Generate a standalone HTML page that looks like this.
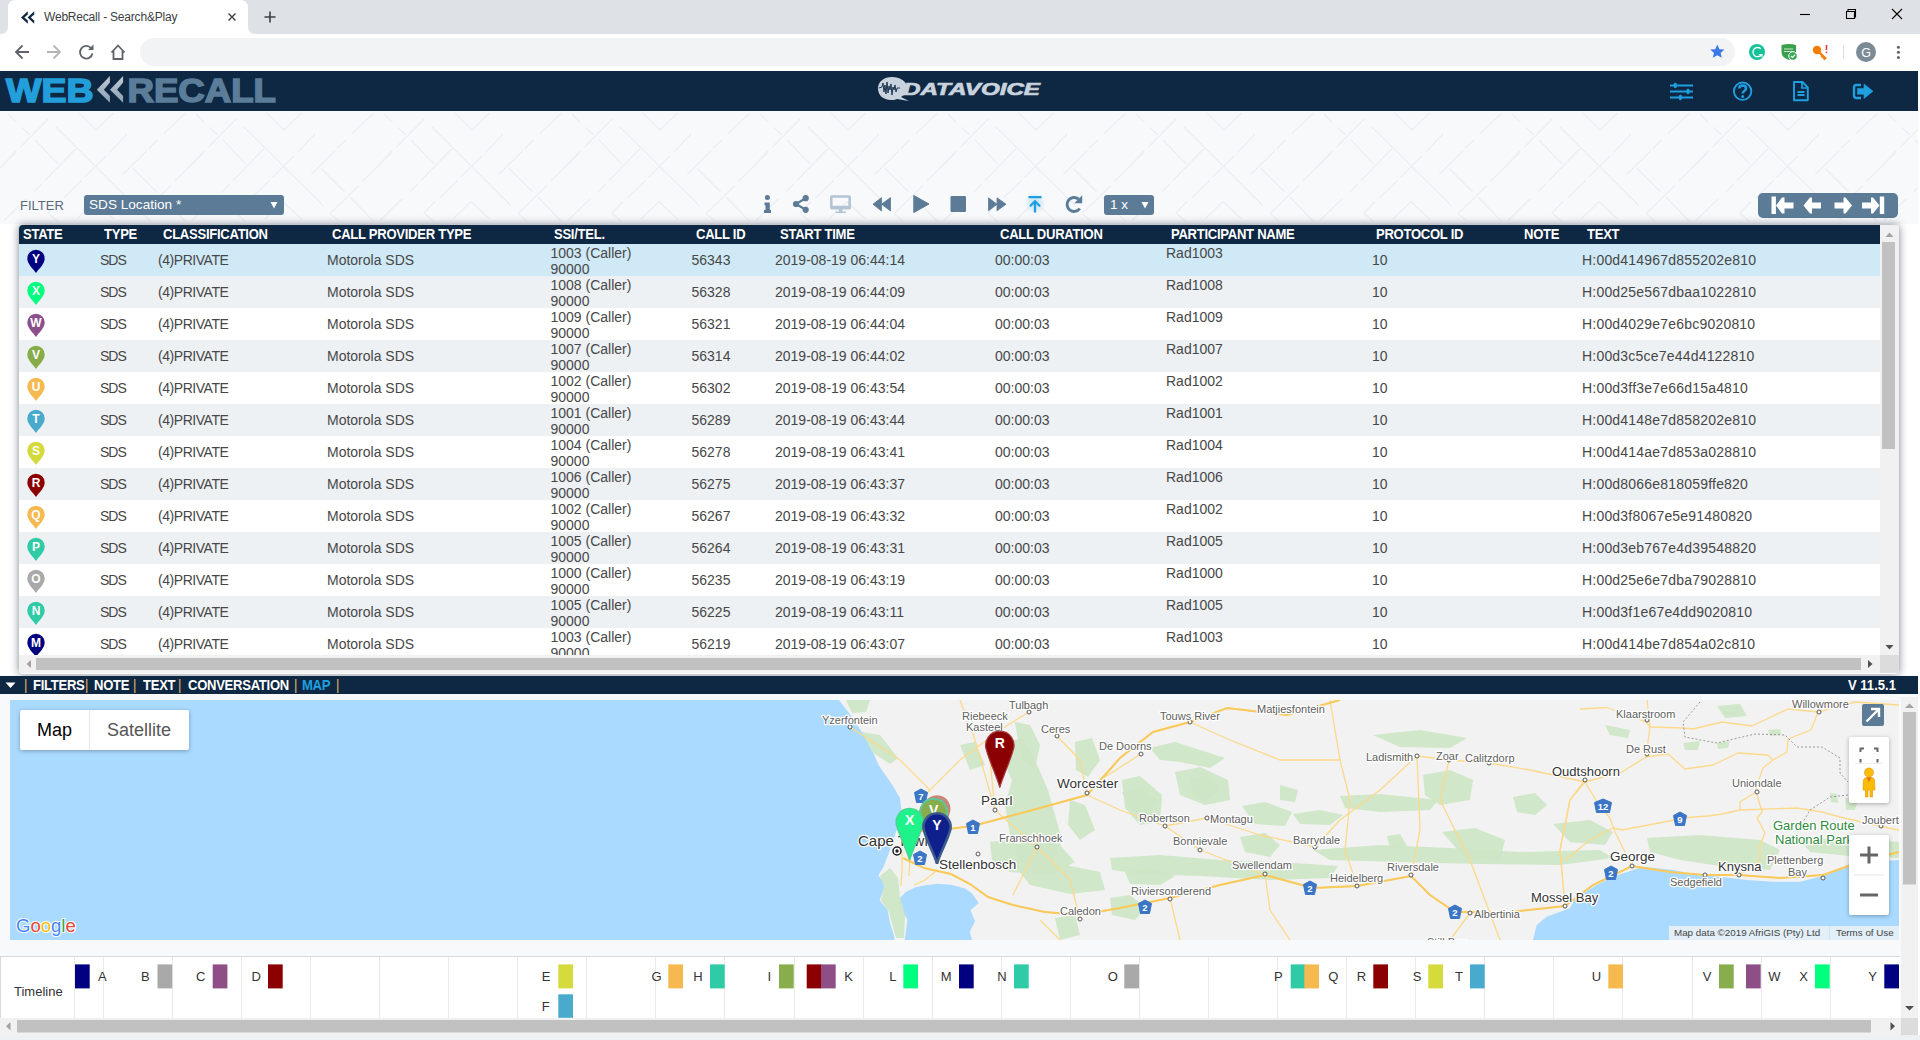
<!DOCTYPE html>
<html><head><meta charset="utf-8">
<style>
*{box-sizing:border-box;margin:0;padding:0}
html,body{width:1920px;height:1040px;overflow:hidden;font-family:"Liberation Sans",sans-serif;background:#f8f9fb;position:relative}
.abs{position:absolute}
#tabbar{left:0;top:0;width:1920px;height:34px;background:#dee1e6}
#tab{left:8px;top:1px;width:240px;height:33px;background:#fff;border-radius:8px 8px 0 0}
#tabtitle{left:44px;top:10px;font-size:12px;letter-spacing:-0.2px;color:#3c4043;white-space:nowrap}
#toolbar{left:0;top:34px;width:1920px;height:37px;background:#fff}
#omni{left:140px;top:38px;width:1595px;height:28px;background:#f1f3f4;border-radius:14px}
#hdr{left:0;top:71px;width:1918px;height:40px;background:#0e2742}
#pscroll{left:1918px;top:71px;width:2px;height:969px;background:#fff}
.lbl{font-size:13px;color:#5b6b7b}
#filterlbl{left:20px;top:198px}
#filtersel{left:84px;top:195px;width:200px;height:20px;background:#5b7b96;border-radius:3px;color:#fff;font-size:13.6px;padding:2px 0 0 5px}
#tbl{left:19px;top:225px;width:1880px;height:449px;background:#fff;box-shadow:0 0 9px rgba(15,30,50,.55);border-radius:4px;overflow:hidden}
#thead{left:0;top:0;width:1861px;height:19px;background:#0e2742;color:#fff;font-weight:bold;font-size:13px}
#thead span{position:absolute;top:1px;white-space:nowrap;letter-spacing:-0.3px;font-size:14.5px;transform:scaleX(.9);transform-origin:0 0}
.row{position:absolute;left:0;width:1861px;height:32px;font-size:14px;color:#474747}
.row span{position:absolute;white-space:nowrap}
.row .c{top:8px}
.row .t2{top:2px;line-height:15.5px}
.row .pn{top:1px}
#vscroll{left:1861px;top:0;width:19px;height:431px;background:#f1f1f1}
#hscroll{left:0;top:430px;width:1861px;height:18px;background:#f1f1f1}
#bar{left:0;top:676px;width:1918px;height:18px;background:#0e2742;color:#fff;font-weight:bold;font-size:13px}
.bt{position:absolute;top:1px;white-space:nowrap;letter-spacing:-0.3px;font-size:14.5px;transform:scaleX(.9);transform-origin:0 0}
.sep{color:#e3b867;font-weight:normal}
#map{left:10px;top:700px;width:1889px;height:240px;background:#aad3fb;overflow:hidden}
#mscroll{left:1901px;top:697px;width:17px;height:321px;background:#f1f1f1}
#tl{left:0;top:956px;width:1900px;height:62px;background:#fff;border-top:1px solid #d6d6d6}
#tlscroll{left:0;top:1018px;width:1900px;height:15px;background:#f1f1f1}
</style></head><body>
<div id="tabbar" class="abs"></div>
<svg class="abs" style="left:0;top:0" width="300" height="34" viewBox="0 0 300 34">
<path d="M0 34 Q8 34 8 26 L8 8 Q8 0 16 0 L240 0 Q248 0 248 8 L248 26 Q248 34 256 34 Z" fill="#fff"/>
<path d="M21 17.5 L27.8 11.2 V14.6 L24.3 17.5 L27.8 20.6 V23.8 Z M27.6 17.5 L34.2 11.2 V14.6 L30.8 17.5 L34.2 20.6 V23.8 Z" fill="#0e2742"/>
<path d="M228.5 13.5 L235.5 20.5 M235.5 13.5 L228.5 20.5" stroke="#3c4043" stroke-width="1.4"/>
<path d="M270 11.5 V22.5 M264.5 17 H275.5" stroke="#3c4043" stroke-width="1.6"/>
</svg>
<div id="tabtitle" class="abs">WebRecall - Search&amp;Play</div>
<svg class="abs" style="left:1780px;top:0" width="140" height="34" viewBox="0 0 140 34">
<path d="M20 14.5 H30" stroke="#000" stroke-width="1.1"/>
<path d="M66.5 11.5 H74.5 V18.5 H66.5 Z M68 11.5 V9.5 H75.5 V17 H74.5" fill="none" stroke="#000" stroke-width="1.1"/>
<path d="M112 9 L122 19 M122 9 L112 19" stroke="#000" stroke-width="1.1"/>
</svg>
<div id="toolbar" class="abs"></div>
<svg class="abs" style="left:0;top:34px" width="140" height="37" viewBox="0 0 140 37">
<path d="M29 18 H16.5 M22.5 11.5 L16 18 L22.5 24.5" fill="none" stroke="#5f6368" stroke-width="1.8"/>
<path d="M47 18 H59.5 M53.5 11.5 L60 18 L53.5 24.5" fill="none" stroke="#b4b6b8" stroke-width="1.8"/>
<path d="M91.2 14.2 A6.3 6.3 0 1 0 92.5 19.5" fill="none" stroke="#5f6368" stroke-width="1.8"/>
<path d="M93.5 10.5 V16 H88 Z" fill="#5f6368"/>
<path d="M111.5 18.5 L118 11.5 L124.5 18.5 M113.5 17 V25 H122.5 V17" fill="none" stroke="#5f6368" stroke-width="1.8" stroke-linejoin="miter"/>
</svg>
<div id="omni" class="abs"></div>
<svg class="abs" style="left:1700px;top:34px" width="220" height="37" viewBox="0 0 220 37">
<path d="M17.3 10.5 L19.4 15.2 L24.4 15.6 L20.6 18.9 L21.8 23.8 L17.3 21.2 L12.8 23.8 L14 18.9 L10.2 15.6 L15.2 15.2 Z" fill="#3b78e7"/>
<circle cx="57" cy="18" r="8" fill="#15c39a"/>
<path d="M60.8 14.8 A4.6 4.6 0 1 0 61.3 20.8" fill="none" stroke="#fff" stroke-width="1.3"/><path d="M58.8 20.6 H62 V23.2" fill="none" stroke="#fff" stroke-width="1.2"/>
<path d="M81.5 11 Q89 9 96 11 L96 18 Q96 23.5 89 26 Q81.5 23.5 81.5 18 Z" fill="#3a9f4a"/>
<path d="M84 15 H93 M84 17.5 H93" stroke="#c8e6c9" stroke-width="1"/>
<circle cx="93" cy="22" r="4.3" fill="#34a853" stroke="#fff" stroke-width="1"/>
<path d="M91 22 L92.5 23.5 L95.2 20.6" fill="none" stroke="#fff" stroke-width="1.2"/>
<circle cx="117" cy="16" r="4.2" fill="#f57c00"/>

<path d="M119.5 18.5 L126 25 M123 22 L121.5 23.5 M125 24 L123.5 25.5" stroke="#f57c00" stroke-width="2.4"/>
<path d="M126.5 11 V16" stroke="#e53935" stroke-width="1.6"/>
<circle cx="126.5" cy="18.3" r="0.9" fill="#e53935"/>
<path d="M143.5 11 V25" stroke="#dadce0" stroke-width="1"/>
<circle cx="166" cy="18" r="10" fill="#7a8b96"/>
<text x="166" y="22.5" text-anchor="middle" font-family="Liberation Sans" font-size="12.5" fill="#fff">G</text>
<circle cx="198.4" cy="13.2" r="1.5" fill="#5f6368"/><circle cx="198.4" cy="18.3" r="1.5" fill="#5f6368"/><circle cx="198.4" cy="23.4" r="1.5" fill="#5f6368"/>
</svg>
<div id="hdr" class="abs"></div>
<svg class="abs" style="left:0;top:71px" width="300" height="40" viewBox="0 71 300 40">
<defs><linearGradient id="chg" x1="0" y1="0" x2="0" y2="1"><stop offset="0" stop-color="#c3cad2"/><stop offset="1" stop-color="#8aa1b5"/></linearGradient></defs>
<text x="6" y="101.5" textLength="87.5" lengthAdjust="spacingAndGlyphs" font-family="Liberation Sans" font-weight="bold" font-size="34" fill="#229fdb" stroke="#229fdb" stroke-width="1.6" stroke-linejoin="miter">WEB</text>
<path d="M96.8 89.7 L109.9 76 V82.4 L103.9 89.7 L109.9 95.9 V102.8 Z M110 89.7 L123.1 76 V82.4 L117.1 89.7 L123.1 95.9 V102.8 Z" fill="url(#chg)"/>
<text x="127.5" y="101.5" textLength="148.5" lengthAdjust="spacingAndGlyphs" font-family="Liberation Sans" font-weight="bold" font-size="34" fill="#5b7d99" stroke="#5b7d99" stroke-width="1.6" stroke-linejoin="miter">RECALL</text>
</svg>
<svg class="abs" style="left:870px;top:71px" width="180" height="40" viewBox="0 0 180 40">
<path d="M22 6 C30 6 37 10 37 17 C37 21 35 24 31 26 L39 30 L27 28 C25 29 23 29 21 29 C13 29 8 24 8 17.5 C8 10.5 14 6 22 6 Z" fill="#c8d3dd"/>
<path d="M9 17 L12 16 L13 12 L14 21 L15 14 L16 23 L17 11 L18 22 L19 15 L20 19 L21 13 L22 24 L23 16 L24 19 L25 14 L26 21 L27 17 L30 17" fill="none" stroke="#0e2742" stroke-width="0.9"/>
<text x="33" y="23.5" textLength="137" lengthAdjust="spacingAndGlyphs" font-family="Liberation Sans" font-weight="bold" font-style="italic" font-size="17" fill="#c8d3dd" stroke="#c8d3dd" stroke-width="0.7">DATAVOICE</text>
</svg>
<svg class="abs" style="left:1660px;top:71px" width="230" height="40" viewBox="0 0 230 40">
<path d="M10 14.5 H33 M10 20.5 H33 M10 26.5 H33" stroke="#1e9fe0" stroke-width="2.2"/>
<rect x="13.8" y="11.8" width="3" height="5.4" rx="1.4" fill="#1e9fe0"/><rect x="26.5" y="17.8" width="3" height="5.4" rx="1.4" fill="#1e9fe0"/><rect x="18.9" y="23.8" width="3" height="5.4" rx="1.4" fill="#1e9fe0"/>
<circle cx="82.6" cy="20.2" r="8.7" fill="none" stroke="#1e9fe0" stroke-width="1.9"/>
<path d="M79.3 17.4 C79.3 13.6 86 13.6 86 17.4 C86 19.8 82.7 20 82.7 22.6" fill="none" stroke="#1e9fe0" stroke-width="2.5"/>
<circle cx="82.7" cy="25.6" r="1.5" fill="#1e9fe0"/>
<path d="M134 11 H142.5 L147.8 16.5 V29.3 H134 Z" fill="none" stroke="#1e9fe0" stroke-width="1.9" stroke-linejoin="round"/>
<path d="M142 11 V17 H147.8" fill="none" stroke="#1e9fe0" stroke-width="1.7"/>
<path d="M137.5 21 H144.5 M137.5 24 H144.5" fill="none" stroke="#1e9fe0" stroke-width="1.8"/>
<path d="M201 14 H196.5 Q194 14 194 16.5 V24.5 Q194 27 196.5 27 H201" fill="none" stroke="#1e9fe0" stroke-width="2.4"/>
<path d="M197.5 17.4 H204 V13 L213 20.2 L204 27.5 V23.2 H197.5 Z" fill="#1e9fe0" stroke="#1e9fe0" stroke-width="0.6" stroke-linejoin="round"/>
</svg>
<div id="pscroll" class="abs"></div>
<svg class="abs" style="left:0;top:111px" width="1918" height="113" viewBox="0 0 1918 113"><defs><pattern id="bgp" patternUnits="userSpaceOnUse" x="4" y="0" width="188" height="113"><g fill="none" stroke="#ebeef2" stroke-width="1.4"><polyline points="-136.0,16.0 -57.0,94.5"/><polyline points="-65.0,23.0 -82.4,41.5"/><polyline points="-86.0,45.0 -107.3,66.0"/><polyline points="-110.6,69.7 -128.3,86.8"/><polyline points="-113.0,2.0 -96.0,19.0 -78.5,2.0"/><polyline points="-115.0,108.0 -97.0,90.7 -78.5,108.0"/><polyline points="-144.0,8.0 -171.4,36.0"/><polyline points="-176.0,40.0 -188.0,53.0"/><polyline points="-170.3,16.6 -162.6,23.8"/><polyline points="-157.0,29.0 -134.0,53.0"/><polyline points="-116.0,37.6 -147.0,69.7"/><polyline points="-150.4,73.0 -158.0,81.0"/><polyline points="-34.3,29.0 -43.2,37.6"/><polyline points="-45.4,40.0 -68.6,63.0"/><polyline points="-59.0,57.5 -35.4,80.7"/><polyline points="12.0,41.0 -17.2,70.0"/><polyline points="-21.0,74.6 -50.0,102.8"/><polyline points="-30.0,86.0 -7.0,110.0"/><polyline points="-7.0,2.8 -28.2,22.7"/><polyline points="4.0,3.0 12.0,11.0"/><polyline points="-166.0,88.0 -188.0,109.5"/><polyline points="-133.0,90.7 -144.0,102.0 -135.0,110.0"/><polyline points="-50.0,102.8 -41.0,110.0"/><polyline points="52.0,16.0 131.0,94.5"/><polyline points="123.0,23.0 105.6,41.5"/><polyline points="102.0,45.0 80.7,66.0"/><polyline points="77.4,69.7 59.7,86.8"/><polyline points="75.0,2.0 92.0,19.0 109.5,2.0"/><polyline points="73.0,108.0 91.0,90.7 109.5,108.0"/><polyline points="44.0,8.0 16.6,36.0"/><polyline points="12.0,40.0 0.0,53.0"/><polyline points="17.7,16.6 25.4,23.8"/><polyline points="31.0,29.0 54.0,53.0"/><polyline points="72.0,37.6 41.0,69.7"/><polyline points="37.6,73.0 30.0,81.0"/><polyline points="153.7,29.0 144.8,37.6"/><polyline points="142.6,40.0 119.4,63.0"/><polyline points="129.0,57.5 152.6,80.7"/><polyline points="200.0,41.0 170.8,70.0"/><polyline points="167.0,74.6 138.0,102.8"/><polyline points="158.0,86.0 181.0,110.0"/><polyline points="181.0,2.8 159.8,22.7"/><polyline points="192.0,3.0 200.0,11.0"/><polyline points="22.0,88.0 0.0,109.5"/><polyline points="55.0,90.7 44.0,102.0 53.0,110.0"/><polyline points="138.0,102.8 147.0,110.0"/><polyline points="240.0,16.0 319.0,94.5"/><polyline points="311.0,23.0 293.6,41.5"/><polyline points="290.0,45.0 268.7,66.0"/><polyline points="265.4,69.7 247.7,86.8"/><polyline points="263.0,2.0 280.0,19.0 297.5,2.0"/><polyline points="261.0,108.0 279.0,90.7 297.5,108.0"/><polyline points="232.0,8.0 204.6,36.0"/><polyline points="200.0,40.0 188.0,53.0"/><polyline points="205.7,16.6 213.4,23.8"/><polyline points="219.0,29.0 242.0,53.0"/><polyline points="260.0,37.6 229.0,69.7"/><polyline points="225.6,73.0 218.0,81.0"/><polyline points="341.7,29.0 332.8,37.6"/><polyline points="330.6,40.0 307.4,63.0"/><polyline points="317.0,57.5 340.6,80.7"/><polyline points="388.0,41.0 358.8,70.0"/><polyline points="355.0,74.6 326.0,102.8"/><polyline points="346.0,86.0 369.0,110.0"/><polyline points="369.0,2.8 347.8,22.7"/><polyline points="380.0,3.0 388.0,11.0"/><polyline points="210.0,88.0 188.0,109.5"/><polyline points="243.0,90.7 232.0,102.0 241.0,110.0"/><polyline points="326.0,102.8 335.0,110.0"/></g></pattern></defs><rect width="1918" height="113" fill="url(#bgp)"/></svg>
<div id="filterlbl" class="abs lbl">FILTER</div>
<div id="filtersel" class="abs">SDS Location *<svg style="position:absolute;left:186px;top:6px" width="8" height="8" viewBox="0 0 8 8"><path d="M0.5 1 H7.5 L4 7.5 Z" fill="#fff"/></svg></div>
<svg class="abs" style="left:755px;top:188px" width="330" height="32" viewBox="755 188 330 32">
<circle cx="767.4" cy="197.6" r="2.5" fill="#5b7b96"/>
<path d="M764.5 202.5 H769.8 V210 H771 V213 H764 V210 H765.5 V205.3 H764.5 Z" fill="#5b7b96"/>
<circle cx="805.7" cy="198.2" r="3.1" fill="#5b7b96"/><circle cx="796" cy="204" r="3.1" fill="#5b7b96"/><circle cx="805.7" cy="209.8" r="3.1" fill="#5b7b96"/>
<path d="M805.7 198.2 L796 204 L805.7 209.8" fill="none" stroke="#5b7b96" stroke-width="2.2"/>
<path d="M832 195.3 H849 Q851 195.3 851 197.3 V207.5 Q851 209.5 849 209.5 H832 Q830 209.5 830 207.5 V197.3 Q830 195.3 832 195.3 Z M832.6 197.8 V205.8 H848.4 V197.8 Z" fill="#b3c4d4" fill-rule="evenodd"/>
<path d="M839 209 H842.5 V211.5 H839 Z M835.5 211.5 H846 V213 H835.5 Z" fill="#b3c4d4"/>
<path d="M873 204.2 L881.5 197.6 V211 Z M881.5 204.2 L890.5 197.6 V211 Z" fill="#5b7b96" stroke="#5b7b96" stroke-width="0.8" stroke-linejoin="round"/>
<path d="M913.8 195.5 L929 204 L913.8 212.5 Z" fill="#5b7b96" stroke="#5b7b96" stroke-width="1" stroke-linejoin="round"/>
<rect x="950.5" y="196" width="15.5" height="16" rx="1.2" fill="#5b7b96"/>
<path d="M988.5 197.8 L997 204.2 L988.5 210.8 Z M997 197.8 L1006 204.2 L997 210.8 Z" fill="#5b7b96" stroke="#5b7b96" stroke-width="0.8" stroke-linejoin="round"/>
<defs><radialGradient id="glow"><stop offset="0" stop-color="#1e9fe0" stop-opacity=".28"/><stop offset="1" stop-color="#1e9fe0" stop-opacity="0"/></radialGradient></defs><circle cx="1035" cy="203" r="11" fill="url(#glow)"/>
<path d="M1028.5 197.2 H1041.5 M1035 212.5 V201.5 M1030 206.3 L1035 201.3 L1040 206.3" fill="none" stroke="#1e9fe0" stroke-width="2.3"/>
<path d="M1078.5 199 A7 7 0 1 0 1079.8 208.5" fill="none" stroke="#5b7b96" stroke-width="2.9"/>
<path d="M1082.2 195.3 V203.2 H1074.3 Z" fill="#5b7b96"/>
</svg>
<div class="abs" style="left:1104px;top:195px;width:50px;height:20px;background:#5b7b96;border-radius:3px;color:#fff;font-size:13.5px;padding:2px 0 0 6px">1 x<svg style="position:absolute;left:37px;top:6px" width="8" height="8" viewBox="0 0 8 8"><path d="M0.5 1 H7.5 L4 7.5 Z" fill="#fff"/></svg></div>
<div class="abs" style="left:1758px;top:193px;width:140px;height:25px;background:#5b7b96;border-radius:5px"></div>
<svg class="abs" style="left:1758px;top:193px" width="140" height="25" viewBox="1758 193 140 25">
<rect x="1771.5" y="196.5" width="4.4" height="17.5" fill="#fff"/>
<path d="M1776 205.5 L1782 197.5 H1784.5 V202.5 H1793.5 V208.5 H1784.5 V213.5 H1782 Z" fill="#fff"/>
<path d="M1803.5 205.5 L1810 197.5 H1812 V202.5 H1821 V208.5 H1812 V213.5 H1810 Z" fill="#fff"/>
<path d="M1852 205.5 L1845.5 197.5 H1843.5 V202.5 H1834.5 V208.5 H1843.5 V213.5 H1845.5 Z" fill="#fff"/>
<path d="M1879.5 205.5 L1873 197.5 H1871 V202.5 H1862 V208.5 H1871 V213.5 H1873 Z" fill="#fff"/>
<rect x="1879.8" y="196.5" width="4.4" height="17.5" fill="#fff"/>
</svg>
<div class="abs" style="left:0;top:224px;width:1918px;height:451px;background:#fff"></div>
<div id="tbl" class="abs">
  <div id="thead" class="abs">
    <span style="left:4px">STATE</span><span style="left:85px">TYPE</span><span style="left:144px">CLASSIFICATION</span><span style="left:313px">CALL PROVIDER TYPE</span><span style="left:535px">SSI/TEL.</span><span style="left:677px">CALL ID</span><span style="left:761px">START TIME</span><span style="left:981px">CALL DURATION</span><span style="left:1152px">PARTICIPANT NAME</span><span style="left:1357px">PROTOCOL ID</span><span style="left:1505px">NOTE</span><span style="left:1568px">TEXT</span>
  </div>
  <div id="rows"><div class="row" style="top:19px;background:#d0e9f6"><svg class="pin" width="19" height="25" viewBox="0 0 19 25" style="position:absolute;left:7px;top:5px"><path d="M10 24C7 19.5 1.3 15 1.3 9.5A8.7 8.7 0 0 1 18.7 9.5C18.7 15 13 19.5 10 24Z" fill="#000080"/><text x="10" y="13.6" text-anchor="middle" font-family="Liberation Sans" font-weight="bold" font-size="12" fill="#fff">Y</text></svg><span class="c" style="left:81px;letter-spacing:-1px">SDS</span><span class="c" style="left:139px;letter-spacing:-0.45px">(4)PRIVATE</span><span class="c" style="left:308px">Motorola SDS</span><span class="t2" style="left:531.5px">1003 (Caller)<br>90000</span><span class="c" style="left:672.5px">56343</span><span class="c" style="left:756px">2019-08-19 06:44:14</span><span class="c" style="left:976px">00:00:03</span><span class="pn" style="left:1147px">Rad1003</span><span class="c" style="left:1353px">10</span><span class="c" style="left:1563px;letter-spacing:0.2px">H:00d414967d855202e810</span></div><div class="row" style="top:51px;background:#eef1f4"><svg class="pin" width="19" height="25" viewBox="0 0 19 25" style="position:absolute;left:7px;top:5px"><path d="M10 24C7 19.5 1.3 15 1.3 9.5A8.7 8.7 0 0 1 18.7 9.5C18.7 15 13 19.5 10 24Z" fill="#00ff7f"/><text x="10" y="13.6" text-anchor="middle" font-family="Liberation Sans" font-weight="bold" font-size="12" fill="#fff">X</text></svg><span class="c" style="left:81px;letter-spacing:-1px">SDS</span><span class="c" style="left:139px;letter-spacing:-0.45px">(4)PRIVATE</span><span class="c" style="left:308px">Motorola SDS</span><span class="t2" style="left:531.5px">1008 (Caller)<br>90000</span><span class="c" style="left:672.5px">56328</span><span class="c" style="left:756px">2019-08-19 06:44:09</span><span class="c" style="left:976px">00:00:03</span><span class="pn" style="left:1147px">Rad1008</span><span class="c" style="left:1353px">10</span><span class="c" style="left:1563px;letter-spacing:0.2px">H:00d25e567dbaa1022810</span></div><div class="row" style="top:83px;background:#ffffff"><svg class="pin" width="19" height="25" viewBox="0 0 19 25" style="position:absolute;left:7px;top:5px"><path d="M10 24C7 19.5 1.3 15 1.3 9.5A8.7 8.7 0 0 1 18.7 9.5C18.7 15 13 19.5 10 24Z" fill="#8b4f8b"/><text x="10" y="13.6" text-anchor="middle" font-family="Liberation Sans" font-weight="bold" font-size="12" fill="#fff">W</text></svg><span class="c" style="left:81px;letter-spacing:-1px">SDS</span><span class="c" style="left:139px;letter-spacing:-0.45px">(4)PRIVATE</span><span class="c" style="left:308px">Motorola SDS</span><span class="t2" style="left:531.5px">1009 (Caller)<br>90000</span><span class="c" style="left:672.5px">56321</span><span class="c" style="left:756px">2019-08-19 06:44:04</span><span class="c" style="left:976px">00:00:03</span><span class="pn" style="left:1147px">Rad1009</span><span class="c" style="left:1353px">10</span><span class="c" style="left:1563px;letter-spacing:0.2px">H:00d4029e7e6bc9020810</span></div><div class="row" style="top:115px;background:#eef1f4"><svg class="pin" width="19" height="25" viewBox="0 0 19 25" style="position:absolute;left:7px;top:5px"><path d="M10 24C7 19.5 1.3 15 1.3 9.5A8.7 8.7 0 0 1 18.7 9.5C18.7 15 13 19.5 10 24Z" fill="#87ad4b"/><text x="10" y="13.6" text-anchor="middle" font-family="Liberation Sans" font-weight="bold" font-size="12" fill="#fff">V</text></svg><span class="c" style="left:81px;letter-spacing:-1px">SDS</span><span class="c" style="left:139px;letter-spacing:-0.45px">(4)PRIVATE</span><span class="c" style="left:308px">Motorola SDS</span><span class="t2" style="left:531.5px">1007 (Caller)<br>90000</span><span class="c" style="left:672.5px">56314</span><span class="c" style="left:756px">2019-08-19 06:44:02</span><span class="c" style="left:976px">00:00:03</span><span class="pn" style="left:1147px">Rad1007</span><span class="c" style="left:1353px">10</span><span class="c" style="left:1563px;letter-spacing:0.2px">H:00d3c5ce7e44d4122810</span></div><div class="row" style="top:147px;background:#ffffff"><svg class="pin" width="19" height="25" viewBox="0 0 19 25" style="position:absolute;left:7px;top:5px"><path d="M10 24C7 19.5 1.3 15 1.3 9.5A8.7 8.7 0 0 1 18.7 9.5C18.7 15 13 19.5 10 24Z" fill="#f5b94f"/><text x="10" y="13.6" text-anchor="middle" font-family="Liberation Sans" font-weight="bold" font-size="12" fill="#fff">U</text></svg><span class="c" style="left:81px;letter-spacing:-1px">SDS</span><span class="c" style="left:139px;letter-spacing:-0.45px">(4)PRIVATE</span><span class="c" style="left:308px">Motorola SDS</span><span class="t2" style="left:531.5px">1002 (Caller)<br>90000</span><span class="c" style="left:672.5px">56302</span><span class="c" style="left:756px">2019-08-19 06:43:54</span><span class="c" style="left:976px">00:00:03</span><span class="pn" style="left:1147px">Rad1002</span><span class="c" style="left:1353px">10</span><span class="c" style="left:1563px;letter-spacing:0.2px">H:00d3ff3e7e66d15a4810</span></div><div class="row" style="top:179px;background:#eef1f4"><svg class="pin" width="19" height="25" viewBox="0 0 19 25" style="position:absolute;left:7px;top:5px"><path d="M10 24C7 19.5 1.3 15 1.3 9.5A8.7 8.7 0 0 1 18.7 9.5C18.7 15 13 19.5 10 24Z" fill="#48aacd"/><text x="10" y="13.6" text-anchor="middle" font-family="Liberation Sans" font-weight="bold" font-size="12" fill="#fff">T</text></svg><span class="c" style="left:81px;letter-spacing:-1px">SDS</span><span class="c" style="left:139px;letter-spacing:-0.45px">(4)PRIVATE</span><span class="c" style="left:308px">Motorola SDS</span><span class="t2" style="left:531.5px">1001 (Caller)<br>90000</span><span class="c" style="left:672.5px">56289</span><span class="c" style="left:756px">2019-08-19 06:43:44</span><span class="c" style="left:976px">00:00:03</span><span class="pn" style="left:1147px">Rad1001</span><span class="c" style="left:1353px">10</span><span class="c" style="left:1563px;letter-spacing:0.2px">H:00d4148e7d858202e810</span></div><div class="row" style="top:211px;background:#ffffff"><svg class="pin" width="19" height="25" viewBox="0 0 19 25" style="position:absolute;left:7px;top:5px"><path d="M10 24C7 19.5 1.3 15 1.3 9.5A8.7 8.7 0 0 1 18.7 9.5C18.7 15 13 19.5 10 24Z" fill="#d3da3a"/><text x="10" y="13.6" text-anchor="middle" font-family="Liberation Sans" font-weight="bold" font-size="12" fill="#fff">S</text></svg><span class="c" style="left:81px;letter-spacing:-1px">SDS</span><span class="c" style="left:139px;letter-spacing:-0.45px">(4)PRIVATE</span><span class="c" style="left:308px">Motorola SDS</span><span class="t2" style="left:531.5px">1004 (Caller)<br>90000</span><span class="c" style="left:672.5px">56278</span><span class="c" style="left:756px">2019-08-19 06:43:41</span><span class="c" style="left:976px">00:00:03</span><span class="pn" style="left:1147px">Rad1004</span><span class="c" style="left:1353px">10</span><span class="c" style="left:1563px;letter-spacing:0.2px">H:00d414ae7d853a028810</span></div><div class="row" style="top:243px;background:#eef1f4"><svg class="pin" width="19" height="25" viewBox="0 0 19 25" style="position:absolute;left:7px;top:5px"><path d="M10 24C7 19.5 1.3 15 1.3 9.5A8.7 8.7 0 0 1 18.7 9.5C18.7 15 13 19.5 10 24Z" fill="#8b0000"/><text x="10" y="13.6" text-anchor="middle" font-family="Liberation Sans" font-weight="bold" font-size="12" fill="#fff">R</text></svg><span class="c" style="left:81px;letter-spacing:-1px">SDS</span><span class="c" style="left:139px;letter-spacing:-0.45px">(4)PRIVATE</span><span class="c" style="left:308px">Motorola SDS</span><span class="t2" style="left:531.5px">1006 (Caller)<br>90000</span><span class="c" style="left:672.5px">56275</span><span class="c" style="left:756px">2019-08-19 06:43:37</span><span class="c" style="left:976px">00:00:03</span><span class="pn" style="left:1147px">Rad1006</span><span class="c" style="left:1353px">10</span><span class="c" style="left:1563px;letter-spacing:0.2px">H:00d8066e818059ffe820</span></div><div class="row" style="top:275px;background:#ffffff"><svg class="pin" width="19" height="25" viewBox="0 0 19 25" style="position:absolute;left:7px;top:5px"><path d="M10 24C7 19.5 1.3 15 1.3 9.5A8.7 8.7 0 0 1 18.7 9.5C18.7 15 13 19.5 10 24Z" fill="#f5b94f"/><text x="10" y="13.6" text-anchor="middle" font-family="Liberation Sans" font-weight="bold" font-size="12" fill="#fff">Q</text></svg><span class="c" style="left:81px;letter-spacing:-1px">SDS</span><span class="c" style="left:139px;letter-spacing:-0.45px">(4)PRIVATE</span><span class="c" style="left:308px">Motorola SDS</span><span class="t2" style="left:531.5px">1002 (Caller)<br>90000</span><span class="c" style="left:672.5px">56267</span><span class="c" style="left:756px">2019-08-19 06:43:32</span><span class="c" style="left:976px">00:00:03</span><span class="pn" style="left:1147px">Rad1002</span><span class="c" style="left:1353px">10</span><span class="c" style="left:1563px;letter-spacing:0.2px">H:00d3f8067e5e91480820</span></div><div class="row" style="top:307px;background:#eef1f4"><svg class="pin" width="19" height="25" viewBox="0 0 19 25" style="position:absolute;left:7px;top:5px"><path d="M10 24C7 19.5 1.3 15 1.3 9.5A8.7 8.7 0 0 1 18.7 9.5C18.7 15 13 19.5 10 24Z" fill="#2ecba6"/><text x="10" y="13.6" text-anchor="middle" font-family="Liberation Sans" font-weight="bold" font-size="12" fill="#fff">P</text></svg><span class="c" style="left:81px;letter-spacing:-1px">SDS</span><span class="c" style="left:139px;letter-spacing:-0.45px">(4)PRIVATE</span><span class="c" style="left:308px">Motorola SDS</span><span class="t2" style="left:531.5px">1005 (Caller)<br>90000</span><span class="c" style="left:672.5px">56264</span><span class="c" style="left:756px">2019-08-19 06:43:31</span><span class="c" style="left:976px">00:00:03</span><span class="pn" style="left:1147px">Rad1005</span><span class="c" style="left:1353px">10</span><span class="c" style="left:1563px;letter-spacing:0.2px">H:00d3eb767e4d39548820</span></div><div class="row" style="top:339px;background:#ffffff"><svg class="pin" width="19" height="25" viewBox="0 0 19 25" style="position:absolute;left:7px;top:5px"><path d="M10 24C7 19.5 1.3 15 1.3 9.5A8.7 8.7 0 0 1 18.7 9.5C18.7 15 13 19.5 10 24Z" fill="#a9a9a9"/><text x="10" y="13.6" text-anchor="middle" font-family="Liberation Sans" font-weight="bold" font-size="12" fill="#fff">O</text></svg><span class="c" style="left:81px;letter-spacing:-1px">SDS</span><span class="c" style="left:139px;letter-spacing:-0.45px">(4)PRIVATE</span><span class="c" style="left:308px">Motorola SDS</span><span class="t2" style="left:531.5px">1000 (Caller)<br>90000</span><span class="c" style="left:672.5px">56235</span><span class="c" style="left:756px">2019-08-19 06:43:19</span><span class="c" style="left:976px">00:00:03</span><span class="pn" style="left:1147px">Rad1000</span><span class="c" style="left:1353px">10</span><span class="c" style="left:1563px;letter-spacing:0.2px">H:00d25e6e7dba79028810</span></div><div class="row" style="top:371px;background:#eef1f4"><svg class="pin" width="19" height="25" viewBox="0 0 19 25" style="position:absolute;left:7px;top:5px"><path d="M10 24C7 19.5 1.3 15 1.3 9.5A8.7 8.7 0 0 1 18.7 9.5C18.7 15 13 19.5 10 24Z" fill="#2ecba6"/><text x="10" y="13.6" text-anchor="middle" font-family="Liberation Sans" font-weight="bold" font-size="12" fill="#fff">N</text></svg><span class="c" style="left:81px;letter-spacing:-1px">SDS</span><span class="c" style="left:139px;letter-spacing:-0.45px">(4)PRIVATE</span><span class="c" style="left:308px">Motorola SDS</span><span class="t2" style="left:531.5px">1005 (Caller)<br>90000</span><span class="c" style="left:672.5px">56225</span><span class="c" style="left:756px">2019-08-19 06:43:11</span><span class="c" style="left:976px">00:00:03</span><span class="pn" style="left:1147px">Rad1005</span><span class="c" style="left:1353px">10</span><span class="c" style="left:1563px;letter-spacing:0.2px">H:00d3f1e67e4dd9020810</span></div><div class="row" style="top:403px;background:#ffffff"><svg class="pin" width="19" height="25" viewBox="0 0 19 25" style="position:absolute;left:7px;top:5px"><path d="M10 24C7 19.5 1.3 15 1.3 9.5A8.7 8.7 0 0 1 18.7 9.5C18.7 15 13 19.5 10 24Z" fill="#000080"/><text x="10" y="13.6" text-anchor="middle" font-family="Liberation Sans" font-weight="bold" font-size="12" fill="#fff">M</text></svg><span class="c" style="left:81px;letter-spacing:-1px">SDS</span><span class="c" style="left:139px;letter-spacing:-0.45px">(4)PRIVATE</span><span class="c" style="left:308px">Motorola SDS</span><span class="t2" style="left:531.5px">1003 (Caller)<br>90000</span><span class="c" style="left:672.5px">56219</span><span class="c" style="left:756px">2019-08-19 06:43:07</span><span class="c" style="left:976px">00:00:03</span><span class="pn" style="left:1147px">Rad1003</span><span class="c" style="left:1353px">10</span><span class="c" style="left:1563px;letter-spacing:0.2px">H:00d414be7d854a02c810</span></div></div>
  <div id="vscroll" class="abs"><svg style="position:absolute;left:0;top:0" width="19" height="431"><path d="M5.5 12 L9.5 7.5 L13.5 12 Z" fill="#a3a3a3"/><rect x="2" y="17" width="13" height="207" fill="#c1c1c1"/><path d="M5.5 420 L9.5 424.5 L13.5 420 Z" fill="#505050"/></svg></div>
  <div id="hscroll" class="abs"><svg style="position:absolute;left:0;top:0" width="1880" height="18"><path d="M12 5 L7.5 9 L12 13 Z" fill="#a3a3a3"/><rect x="17" y="3" width="1825" height="12" fill="#c1c1c1"/><path d="M1849 5 L1853.5 9 L1849 13 Z" fill="#505050"/><rect x="1861" y="0" width="19" height="18" fill="#dcdcdc"/></svg></div>
</div>
<div id="bar" class="abs">
<svg style="position:absolute;left:5px;top:6px" width="11" height="7" viewBox="0 0 11 7"><path d="M0.5 0.5 H10.5 L5.5 6 Z" fill="#fff"/></svg>
<span class="bt" style="left:24px;color:#e3b867;font-weight:normal">|</span>
<span class="bt" style="left:33px">FILTERS</span><span class="bt sep" style="left:85px">|</span>
<span class="bt" style="left:94px">NOTE</span><span class="bt sep" style="left:133px">|</span>
<span class="bt" style="left:143px">TEXT</span><span class="bt sep" style="left:178px">|</span>
<span class="bt" style="left:188px">CONVERSATION</span><span class="bt sep" style="left:294px">|</span>
<span class="bt" style="left:302px;color:#1e9fe0">MAP</span><span class="bt sep" style="left:336px">|</span>
<span class="bt" style="left:1848px;letter-spacing:0px">V 11.5.1</span>
</div>
<svg class="abs" style="left:10px;top:700px;overflow:hidden" width="1889" height="240" viewBox="10 700 1889 240">
<rect x="10" y="700" width="1889" height="240" fill="#aadaff"/>
<polygon points="839,700 852,717 869,743 878.6,765 893,786 900,798 902.6,820 896,832 890,850 883.7,866.4 878.3,875.6 882.8,881 884.7,886.5 879.6,900.2 887.4,909.4 890.1,923 893.8,935 894.7,940 904.7,940 906.6,925.8 907.5,919.4 899.3,906.6 900.2,897.5 905.7,892 914.8,887.4 923.9,885.6 937.6,883.8 951.3,884.7 965,888.4 972.3,893.8 978.7,903 970.5,910.3 975,921.2 969.6,932.2 972.3,940 1533,940 1536.7,925 1546.7,916.7 1570,908.3 1575,898.3 1596.7,885 1613,876.7 1643,866.7 1673,870 1696.7,875 1720,876.7 1746.7,880 1773,881.7 1800,881.7 1826.7,875 1846.7,865 1866.7,861.7 1899,860 1899,700" fill="#f2f2f2"/>
<polygon points="1015,722 1030,725 1040,745 1035,768 1022,760 1018,740" fill="#cfe6c6" opacity="0.95"/>
<polygon points="1122,792 1140,788 1158,800 1150,815 1130,810" fill="#cfe6c6" opacity="0.95"/>
<polygon points="1150,748 1175,742 1200,750 1225,758 1210,768 1180,762 1160,760" fill="#cfe6c6" opacity="0.95"/>
<polygon points="1190,778 1210,775 1220,790 1205,802 1192,795" fill="#cfe6c6" opacity="0.95"/>
<polygon points="1242,806 1265,802 1292,812 1285,826 1255,824" fill="#cfe6c6" opacity="0.95"/>
<polygon points="1110,858 1160,855 1220,860 1280,862 1338,866 1330,878 1270,880 1200,876 1140,874 1112,870" fill="#cfe6c6" opacity="0.95"/>
<polygon points="1015,866 1050,862 1100,872 1105,890 1070,894 1030,885" fill="#cfe6c6" opacity="0.95"/>
<polygon points="1442,832 1475,828 1505,840 1500,860 1465,858" fill="#cfe6c6" opacity="0.95"/>
<polygon points="1110,898 1130,895 1146,908 1135,920 1112,915" fill="#cfe6c6" opacity="0.95"/>
<polygon points="1055,918 1075,915 1080,935 1060,940" fill="#cfe6c6" opacity="0.95"/>
<polygon points="1340,796 1380,794 1438,800 1430,810 1380,812 1345,808" fill="#cfe6c6" opacity="0.95"/>
<polygon points="960,745 975,742 985,765 970,770" fill="#cfe6c6" opacity="0.95"/>
<polygon points="1070,800 1085,805 1095,830 1080,840 1068,825" fill="#cfe6c6" opacity="0.95"/>
<polygon points="1008,742 1022,738 1035,760 1048,790 1055,815 1062,840 1052,868 1035,872 1018,860 1010,835 1005,805 1012,780 1003,760" fill="#cfe6c6" opacity="0.95"/>
<polygon points="990,842 1020,838 1060,845 1075,862 1050,875 1010,872 992,860" fill="#cfe6c6" opacity="0.95"/>
<polygon points="1075,742 1092,738 1100,760 1088,777 1076,770" fill="#cfe6c6" opacity="0.95"/>
<polygon points="1122,780 1140,776 1162,795 1160,822 1140,825 1125,808" fill="#cfe6c6" opacity="0.95"/>
<polygon points="1175,772 1200,767 1228,780 1230,800 1205,805 1180,795" fill="#cfe6c6" opacity="0.95"/>
<polygon points="1240,837 1265,833 1280,845 1270,857 1245,852" fill="#cfe6c6" opacity="0.95"/>
<polygon points="1125,872 1150,868 1175,876 1160,885 1130,884" fill="#cfe6c6" opacity="0.95"/>
<polygon points="862,732 880,735 898,758 890,764 872,752" fill="#cfe6c6" opacity="0.95"/>
<polygon points="880,876 890,868 898,878 900,897 905,915 904,938 896,938 889,912 881,900 884,886" fill="#cfe6c6" opacity="0.95"/>
<polygon points="846,700 870,700 866,712 852,713" fill="#cfe6c6" opacity="0.95"/>
<polygon points="1373,735 1420,730 1467,738 1450,748 1400,747" fill="#cfe6c6" opacity="0.95"/>
<polygon points="1423,775 1450,770 1473,780 1470,800 1440,805 1425,795" fill="#cfe6c6" opacity="0.95"/>
<polygon points="1513,797 1535,793 1547,805 1535,815 1517,812" fill="#cfe6c6" opacity="0.95"/>
<polygon points="1293,814 1320,810 1343,815 1330,825 1300,824" fill="#cfe6c6" opacity="0.95"/>
<polygon points="1387,836 1400,834 1407,846 1390,848" fill="#cfe6c6" opacity="0.95"/>
<polygon points="1280,785 1298,790 1295,802 1280,800" fill="#cfe6c6" opacity="0.95"/>
<polygon points="1605,725 1630,730 1628,738 1610,735" fill="#cfe6c6" opacity="0.95"/>
<polygon points="1683,743 1700,741 1698,750 1685,750" fill="#cfe6c6" opacity="0.95"/>
<polygon points="1717,743 1730,741 1728,748 1718,749" fill="#cfe6c6" opacity="0.95"/>
<polygon points="1768,730 1780,729 1781,735 1770,736" fill="#cfe6c6" opacity="0.95"/>
<polygon points="1723,712 1737,712 1736,715 1724,715" fill="#cfe6c6" opacity="0.95"/>
<polygon points="1830,793 1837,794 1838,803 1831,802" fill="#cfe6c6" opacity="0.95"/>
<polygon points="1845,798 1858,799 1855,810 1846,810" fill="#cfe6c6" opacity="0.95"/>
<polygon points="1313,850 1380,845 1450,848 1520,852 1600,850 1613,858 1560,865 1480,864 1400,862 1330,860" fill="#cfe6c6" opacity="0.95"/>
<polygon points="1553,824 1590,820 1613,832 1605,845 1570,842" fill="#cfe6c6" opacity="0.95"/>
<polygon points="1647,838 1700,835 1760,840 1780,850 1770,870 1720,866 1680,860 1650,852" fill="#cfe6c6" opacity="0.95"/>
<polygon points="1717,706 1740,704 1747,716 1725,718" fill="#cfe6c6" opacity="0.95"/>
<polygon points="1800,840 1850,838 1899,842 1899,858 1850,856 1810,852" fill="#cfe6c6" opacity="0.95"/>
<g fill="none" stroke="#fdd98a" stroke-width="1.3" stroke-linejoin="round">
<polyline points="905,832 940,830 973,826 1040,808 1087,795 1105,775 1120,758 1153,732 1190,722 1227,708 1287,715 1340,700"/>
<polyline points="903,858 924,868 951,874 970,884 988,897 1013,905 1045,912 1080,915 1120,908 1170,898 1220,885 1265,875 1313,888 1357,886 1411,876 1430,895 1455,912 1510,912 1565,906 1593,885 1632,866 1670,872 1705,875 1739,875 1780,878 1823,875 1860,862 1899,852"/>
<polyline points="1315,847 1340,820 1380,790 1417,756 1449,760 1489,763 1530,770 1585,782"/>
<polyline points="1087,795 1120,810 1165,826 1207,818"/>
<polyline points="1165,826 1200,850 1265,875"/>
<polyline points="1207,818 1260,835 1315,847"/>
<polyline points="995,810 1037,847 1013,895"/>
<polyline points="1057,736 1080,760 1087,795"/>
<polyline points="1029,712 1000,730 960,760 920,800"/>
<polyline points="850,727 900,760 930,790"/>
<polyline points="1357,886 1345,850 1350,800 1340,760 1330,700"/>
<polyline points="1411,876 1420,830 1417,756"/>
<polyline points="1565,906 1560,850 1570,800 1585,780"/>
<polyline points="1080,919 1070,880 1037,847"/>
<polyline points="1170,898 1180,940"/>
<polyline points="1470,913 1450,940"/>
<polyline points="1449,760 1440,800 1470,860 1500,940"/>
<polyline points="995,810 990,760 1000,730"/>
<polyline points="960,700 975,740 995,810"/>
<polyline points="1141,754 1100,780"/>
<polyline points="1190,722 1230,740 1280,760 1340,760"/>
<polyline points="1265,875 1270,910 1290,940"/>
<polyline points="1040,920 1060,940"/>
<polyline points="1580,709 1607,707.5 1646,722 1650,727 1683,728 1693,729 1722,722 1752,726 1788,709 1818,712 1855,702 1899,705"/>
<polyline points="1818,712 1811,730 1788,739 1787,752 1773,760 1763,768 1757,785 1756,792 1740,802 1740,810 1722,814 1708,816 1687,817.5 1680,819 1622,830 1613,828"/>
<polyline points="1646,757 1668,754 1685,769 1713,765 1738,753 1768,755 1773,760"/>
<polyline points="1585,782 1622,772 1646,757 1650,727 1647,700"/>
<polyline points="1585,782 1597,802 1610,818 1615,832 1623,848 1632,866"/>
<polyline points="1740,810 1797,808 1822,812 1840,817 1888,828 1899,830"/>
<polyline points="1757,795 1762,812 1757,818 1765,833 1760,845 1760,860 1739,875"/>
<polyline points="1565,906 1560,850 1570,800 1585,782"/>
<polyline points="1613,828 1590,840 1565,860"/>
<polyline points="902,852 902,870 901,886"/>
<polyline points="910,858 909,876"/>
<polyline points="935,872 925,880 914,885"/>
</g>
<g fill="none" stroke="#f9c95a" stroke-width="2">
<polyline points="905,832 940,830 973,826 1040,808 1087,795 1105,775 1120,758 1153,732 1190,722 1227,708 1287,715 1340,700"/>
<polyline points="903,858 924,868 951,874 970,884 988,897 1013,905 1045,912 1080,915 1120,908 1170,898 1220,885 1265,875 1313,888 1357,886 1411,876 1430,895 1455,912 1510,912 1565,906 1593,885 1632,866 1670,872 1705,875 1739,875 1780,878 1823,875 1860,862 1899,852"/>
</g>
<polyline points="1700,702 1683,722 1685,737 1717,743 1755,734 1785,735 1797,747 1822,747 1840,758 1840,773 1848,782" fill="none" stroke="#999" stroke-width="1" stroke-dasharray="2,2"/>
<polyline points="1848,795 1830,797 1810,810 1803,822" fill="none" stroke="#999" stroke-width="1" stroke-dasharray="2,2"/>
<circle cx="850" cy="727" r="2" fill="#fff" stroke="#555" stroke-width="1"/>
<circle cx="1029" cy="712" r="2" fill="#fff" stroke="#555" stroke-width="1"/>
<circle cx="1000" cy="730" r="2" fill="#fff" stroke="#555" stroke-width="1"/>
<circle cx="1057" cy="736" r="2" fill="#fff" stroke="#555" stroke-width="1"/>
<circle cx="1141" cy="754" r="2" fill="#fff" stroke="#555" stroke-width="1"/>
<circle cx="1190" cy="722" r="2" fill="#fff" stroke="#555" stroke-width="1"/>
<circle cx="1087" cy="793" r="2" fill="#fff" stroke="#555" stroke-width="1"/>
<circle cx="995" cy="810" r="2" fill="#fff" stroke="#555" stroke-width="1"/>
<circle cx="1165" cy="826" r="2" fill="#fff" stroke="#555" stroke-width="1"/>
<circle cx="1207" cy="818" r="2" fill="#fff" stroke="#555" stroke-width="1"/>
<circle cx="1037" cy="847" r="2" fill="#fff" stroke="#555" stroke-width="1"/>
<circle cx="978" cy="854" r="2" fill="#fff" stroke="#555" stroke-width="1"/>
<circle cx="1200" cy="850" r="2" fill="#fff" stroke="#555" stroke-width="1"/>
<circle cx="1315" cy="847" r="2" fill="#fff" stroke="#555" stroke-width="1"/>
<circle cx="1265" cy="874" r="2" fill="#fff" stroke="#555" stroke-width="1"/>
<circle cx="1170" cy="899" r="2" fill="#fff" stroke="#555" stroke-width="1"/>
<circle cx="1080" cy="919" r="2" fill="#fff" stroke="#555" stroke-width="1"/>
<circle cx="1357" cy="886" r="2" fill="#fff" stroke="#555" stroke-width="1"/>
<circle cx="1411" cy="875" r="2" fill="#fff" stroke="#555" stroke-width="1"/>
<circle cx="1470" cy="913" r="2" fill="#fff" stroke="#555" stroke-width="1"/>
<circle cx="1565" cy="906" r="2" fill="#fff" stroke="#555" stroke-width="1"/>
<circle cx="1632" cy="866" r="2" fill="#fff" stroke="#555" stroke-width="1"/>
<circle cx="1705" cy="875" r="2" fill="#fff" stroke="#555" stroke-width="1"/>
<circle cx="1739" cy="875" r="2" fill="#fff" stroke="#555" stroke-width="1"/>
<circle cx="1823" cy="878" r="2" fill="#fff" stroke="#555" stroke-width="1"/>
<circle cx="1881" cy="826" r="2" fill="#fff" stroke="#555" stroke-width="1"/>
<circle cx="1757" cy="792" r="2" fill="#fff" stroke="#555" stroke-width="1"/>
<circle cx="1585" cy="780" r="2" fill="#fff" stroke="#555" stroke-width="1"/>
<circle cx="1647" cy="754" r="2" fill="#fff" stroke="#555" stroke-width="1"/>
<circle cx="1647" cy="720" r="2" fill="#fff" stroke="#555" stroke-width="1"/>
<circle cx="1819" cy="712" r="2" fill="#fff" stroke="#555" stroke-width="1"/>
<circle cx="1417" cy="756" r="2" fill="#fff" stroke="#555" stroke-width="1"/>
<circle cx="1449" cy="760" r="2" fill="#fff" stroke="#555" stroke-width="1"/>
<circle cx="1489" cy="763" r="2" fill="#fff" stroke="#555" stroke-width="1"/>
<g font-family="Liberation Sans" fill="#5e5e5e" stroke="#fff" stroke-width="2.5" paint-order="stroke" stroke-linejoin="round">
<text x="822" y="724" font-size="11" fill="#606060">Yzerfontein</text>
<text x="1009" y="709" font-size="11" fill="#606060">Tulbagh</text>
<text x="962" y="720" font-size="11" fill="#606060">Riebeeck</text>
<text x="966" y="731" font-size="11" fill="#606060">Kasteel</text>
<text x="1041" y="733" font-size="11" fill="#606060">Ceres</text>
<text x="1160" y="720" font-size="11" fill="#606060">Touws River</text>
<text x="1257" y="713" font-size="11" fill="#606060">Matjiesfontein</text>
<text x="1616" y="718" font-size="11" fill="#606060">Klaarstroom</text>
<text x="1792" y="708" font-size="11" fill="#606060">Willowmore</text>
<text x="1099" y="750" font-size="11" fill="#606060">De Doorns</text>
<text x="1626" y="753" font-size="11" fill="#606060">De Rust</text>
<text x="1366" y="761" font-size="11" fill="#606060">Ladismith</text>
<text x="1436" y="760" font-size="11" fill="#606060">Zoar</text>
<text x="1465" y="762" font-size="11" fill="#606060">Calitzdorp</text>
<text x="1552" y="776" font-size="13" fill="#333">Oudtshoorn</text>
<text x="1732" y="787" font-size="11" fill="#606060">Uniondale</text>
<text x="1057" y="788" font-size="13.5" fill="#333">Worcester</text>
<text x="981" y="805" font-size="13.5" fill="#333">Paarl</text>
<text x="1139" y="822" font-size="11" fill="#606060">Robertson</text>
<text x="1210" y="823" font-size="11" fill="#606060">Montagu</text>
<text x="1862" y="824" font-size="11" fill="#606060">Joubert</text>
<text x="999" y="842" font-size="11" fill="#606060">Franschhoek</text>
<text x="1173" y="845" font-size="11" fill="#606060">Bonnievale</text>
<text x="1293" y="844" font-size="11" fill="#606060">Barrydale</text>
<text x="858" y="845.5" font-size="15" fill="#333">Cape Town</text>
<text x="939" y="869" font-size="13.5" fill="#333">Stellenbosch</text>
<text x="1232" y="869" font-size="11" fill="#606060">Swellendam</text>
<text x="1387" y="871" font-size="11" fill="#606060">Riversdale</text>
<text x="1330" y="882" font-size="11" fill="#606060">Heidelberg</text>
<text x="1610" y="861" font-size="13.5" fill="#333">George</text>
<text x="1718" y="871" font-size="13" fill="#333">Knysna</text>
<text x="1767" y="864" font-size="11" fill="#606060">Plettenberg</text>
<text x="1788" y="876" font-size="11" fill="#606060">Bay</text>
<text x="1670" y="886" font-size="11" fill="#606060">Sedgefield</text>
<text x="1131" y="895" font-size="11" fill="#606060">Riviersonderend</text>
<text x="1531" y="902" font-size="13" fill="#333">Mossel Bay</text>
<text x="1060" y="915" font-size="11" fill="#606060">Caledon</text>
<text x="1474" y="918" font-size="11" fill="#606060">Albertinia</text>
<text x="1427" y="946" font-size="11" fill="#606060">Still Bay</text>
<text x="1773" y="830" font-size="13" fill="#2e8b3e">Garden Route</text><text x="1775" y="844" font-size="13" fill="#2e8b3e">National Park</text>
</g>
<path d="M914.5 792.5 L921 789 L927.5 792.5 L925.5 802.5 H916.5 Z" fill="#3b76c6" stroke="#3b76c6" stroke-width="1" stroke-linejoin="round"/>
<text x="921" y="800" text-anchor="middle" font-family="Liberation Sans" font-weight="bold" font-size="9.5" fill="#fff">7</text>
<path d="M966.5 823.5 L973 820 L979.5 823.5 L977.5 833.5 H968.5 Z" fill="#3b76c6" stroke="#3b76c6" stroke-width="1" stroke-linejoin="round"/>
<text x="973" y="831" text-anchor="middle" font-family="Liberation Sans" font-weight="bold" font-size="9.5" fill="#fff">1</text>
<path d="M913.5 854.5 L920 851 L926.5 854.5 L924.5 864.5 H915.5 Z" fill="#3b76c6" stroke="#3b76c6" stroke-width="1" stroke-linejoin="round"/>
<text x="920" y="862" text-anchor="middle" font-family="Liberation Sans" font-weight="bold" font-size="9.5" fill="#fff">2</text>
<path d="M1303.5 884.5 L1310 881 L1316.5 884.5 L1314.5 894.5 H1305.5 Z" fill="#3b76c6" stroke="#3b76c6" stroke-width="1" stroke-linejoin="round"/>
<text x="1310" y="892" text-anchor="middle" font-family="Liberation Sans" font-weight="bold" font-size="9.5" fill="#fff">2</text>
<path d="M1138.5 903.5 L1145 900 L1151.5 903.5 L1149.5 913.5 H1140.5 Z" fill="#3b76c6" stroke="#3b76c6" stroke-width="1" stroke-linejoin="round"/>
<text x="1145" y="911" text-anchor="middle" font-family="Liberation Sans" font-weight="bold" font-size="9.5" fill="#fff">2</text>
<path d="M1448.5 908.5 L1455 905 L1461.5 908.5 L1459.5 918.5 H1450.5 Z" fill="#3b76c6" stroke="#3b76c6" stroke-width="1" stroke-linejoin="round"/>
<text x="1455" y="916" text-anchor="middle" font-family="Liberation Sans" font-weight="bold" font-size="9.5" fill="#fff">2</text>
<path d="M1594.5 802.5 L1603 799 L1611.5 802.5 L1609.5 812.5 H1596.5 Z" fill="#3b76c6" stroke="#3b76c6" stroke-width="1" stroke-linejoin="round"/>
<text x="1603" y="810" text-anchor="middle" font-family="Liberation Sans" font-weight="bold" font-size="9.5" fill="#fff">12</text>
<path d="M1673.5 815.5 L1680 812 L1686.5 815.5 L1684.5 825.5 H1675.5 Z" fill="#3b76c6" stroke="#3b76c6" stroke-width="1" stroke-linejoin="round"/>
<text x="1680" y="823" text-anchor="middle" font-family="Liberation Sans" font-weight="bold" font-size="9.5" fill="#fff">9</text>
<path d="M1604.5 869.5 L1611 866 L1617.5 869.5 L1615.5 879.5 H1606.5 Z" fill="#3b76c6" stroke="#3b76c6" stroke-width="1" stroke-linejoin="round"/>
<text x="1611" y="877" text-anchor="middle" font-family="Liberation Sans" font-weight="bold" font-size="9.5" fill="#fff">2</text>
<circle cx="897" cy="851" r="4" fill="#fff" stroke="#222" stroke-width="1.5"/><circle cx="897" cy="851" r="1.7" fill="#222"/>
<path d="M999.8 787.5 C997.8 779.5 988.44 758.41 986.59 750.60 A14.2 14.2 0 1 1 1013.01 750.60 C1011.16 758.41 1001.8 779.5 999.8 787.5 Z" fill="#8b0000" opacity="1" stroke="#a23a3a" stroke-width="1.2"/><text x="999.8" y="748.1" text-anchor="middle" font-family="Liberation Sans" font-weight="bold" font-size="14" fill="#fff">R</text>
<path d="M937 845 C935 837 926.20 821.17 924.45 813.75 A13.5 13.5 0 1 1 949.55 813.75 C947.80 821.17 939 837 937 845 Z" fill="#c77a6a" opacity="0.9"/>
<path d="M933.7 848 C931.7 840 922.82 824.88 921.05 817.40 A13.6 13.6 0 1 1 946.35 817.40 C944.58 824.88 935.7 840 933.7 848 Z" fill="#88ad4c" opacity="1" stroke="#5ec79a" stroke-width="2"/><text x="933.7" y="815.2" text-anchor="middle" font-family="Liberation Sans" font-weight="bold" font-size="14" fill="#fff">V</text>
<path d="M909.6 859.8 C907.6 851.8 898.88 834.27 897.14 826.90 A13.4 13.4 0 1 1 922.06 826.90 C920.32 834.27 911.6 851.8 909.6 859.8 Z" fill="#1ff28a" opacity="1" stroke="#4ad68f" stroke-width="1.6"/><text x="909.6" y="824.8000000000001" text-anchor="middle" font-family="Liberation Sans" font-weight="bold" font-size="14" fill="#fff">X</text>
<path d="M937 863.7 C935 855.7 926.12 839.28 924.35 831.80 A13.6 13.6 0 1 1 949.65 831.80 C947.88 839.28 939 855.7 937 863.7 Z" fill="#0f1f8c" opacity="1" stroke="#3b5b8c" stroke-width="2.6"/><text x="937" y="829.6" text-anchor="middle" font-family="Liberation Sans" font-weight="bold" font-size="14" fill="#fff">Y</text>
</svg>
<div class="abs" style="left:20px;top:710px;width:169px;height:40px;background:#fff;border-radius:2px;box-shadow:0 1px 4px rgba(0,0,0,.3)"></div>
<div class="abs" style="left:89px;top:710px;width:1px;height:40px;background:#e6e6e6"></div>
<div class="abs" style="left:37px;top:720px;font-size:18px;color:#000">Map</div>
<div class="abs" style="left:107px;top:720px;font-size:18px;color:#565656">Satellite</div>
<svg class="abs" style="left:14px;top:914px" width="70" height="24" viewBox="0 0 70 24"><text x="2" y="18" font-family="Liberation Sans" font-size="18.5" stroke="#fff" stroke-width="2" paint-order="stroke"><tspan fill="#4285f4">G</tspan><tspan fill="#ea4335">o</tspan><tspan fill="#fbbc05">o</tspan><tspan fill="#4285f4">g</tspan><tspan fill="#34a853">l</tspan><tspan fill="#ea4335">e</tspan></text></svg>
<div class="abs" style="left:1669px;top:926px;width:230px;height:14px;background:rgba(245,245,245,.75)"></div>
<div class="abs" style="left:1674px;top:927px;font-size:9.8px;color:#444;white-space:nowrap">Map data ©2019 AfriGIS (Pty) Ltd</div>
<div class="abs" style="left:1829px;top:926px;width:1px;height:14px;background:#cfe3f5"></div>
<div class="abs" style="left:1836px;top:927px;font-size:9.8px;color:#444;white-space:nowrap">Terms of Use</div>
<div class="abs" style="left:1862px;top:704px;width:22px;height:22px;background:#5b7b96;border-radius:2px"></div>
<svg class="abs" style="left:1862px;top:704px" width="22" height="22" viewBox="0 0 22 22"><path d="M4.5 17.5 L16 6 M9 5 H17 V13" fill="none" stroke="#fff" stroke-width="2.4"/></svg>
<div class="abs" style="left:1849px;top:737px;width:40px;height:66px;background:#fff;border-radius:2px;box-shadow:0 1px 4px rgba(0,0,0,.3)"></div>
<svg class="abs" style="left:1849px;top:737px" width="40" height="66" viewBox="0 0 40 66">
<path d="M11.5 15 V11.5 H15 M25 11.5 H28.5 V15 M28.5 22 V25.5 M11.5 22 V25.5" fill="none" stroke="#666" stroke-width="2"/>
<rect x="6" y="26" width="28" height="1" fill="#eee"/>
<circle cx="20" cy="35.5" r="4.5" fill="#fbbc04" stroke="#e38f00" stroke-width="0.6"/>
<path d="M14 53 L14.5 43 Q15 40.5 17.5 40.5 H22.5 Q25 40.5 25.5 43 L26 53 H23.5 V60 H21 V53 H19 V60 H16.5 V53 Z" fill="#fbbc04" stroke="#e38f00" stroke-width="0.6"/>
<path d="M17.5 40.5 L20 45 L22.5 40.5 Z" fill="#e9711c"/>
</svg>
<div class="abs" style="left:1849px;top:835px;width:40px;height:80px;background:#fff;border-radius:2px;box-shadow:0 1px 4px rgba(0,0,0,.3)"></div>
<svg class="abs" style="left:1849px;top:835px" width="40" height="80" viewBox="0 0 40 80">
<path d="M20 11.5 V28.5 M11 20 H29" stroke="#666" stroke-width="3"/>
<rect x="5" y="39.5" width="30" height="1" fill="#e6e6e6"/>
<path d="M11 60 H29" stroke="#666" stroke-width="3"/>
</svg>
<div id="mscroll" class="abs"><svg style="position:absolute;left:0;top:0" width="17" height="321" viewBox="1901 697 17 321"><path d="M1905 708 L1909.5 703.5 L1914 708 Z" fill="#a3a3a3"/><rect x="1903" y="712" width="13" height="172.5" fill="#c1c1c1"/><path d="M1905 1006 L1909.5 1010.5 L1914 1006 Z" fill="#505050"/></svg></div>
<div class="abs" style="left:0;top:956px;width:1900px;height:62px;background:#fff;border-top:1px solid #d9d9d9;border-left:1px solid #d9d9d9"></div>
<svg class="abs" style="left:0;top:956px" width="1920" height="84" viewBox="0 956 1920 84">
<g stroke="#e9e9e9" stroke-width="1">
<path d="M74.5 957 V1018"/>
<path d="M103.5 957 V1018"/>
<path d="M172.5 957 V1018"/>
<path d="M241.5 957 V1018"/>
<path d="M310.5 957 V1018"/>
<path d="M379.5 957 V1018"/>
<path d="M448.5 957 V1018"/>
<path d="M517.5 957 V1018"/>
<path d="M586.5 957 V1018"/>
<path d="M655.5 957 V1018"/>
<path d="M724.5 957 V1018"/>
<path d="M794.5 957 V1018"/>
<path d="M863.5 957 V1018"/>
<path d="M932.5 957 V1018"/>
<path d="M1001.5 957 V1018"/>
<path d="M1070.5 957 V1018"/>
<path d="M1139.5 957 V1018"/>
<path d="M1208.5 957 V1018"/>
<path d="M1277.5 957 V1018"/>
<path d="M1346.5 957 V1018"/>
<path d="M1415.5 957 V1018"/>
<path d="M1484.5 957 V1018"/>
<path d="M1553.5 957 V1018"/>
<path d="M1622.5 957 V1018"/>
<path d="M1692.5 957 V1018"/>
<path d="M1761.5 957 V1018"/>
<path d="M1830.5 957 V1018"/>
</g>
<rect x="75" y="964.4" width="14.7" height="24" fill="#000080"/>
<rect x="157.5" y="964.4" width="14.7" height="24" fill="#a9a9a9"/>
<rect x="212.7" y="964.4" width="14.7" height="24" fill="#8e4f86"/>
<rect x="268" y="964.4" width="14.7" height="24" fill="#8b0000"/>
<rect x="558.3" y="964.4" width="14.7" height="24" fill="#d4db3a"/>
<rect x="558.3" y="994.3" width="14.7" height="23.5" fill="#48aacd"/>
<rect x="668.3" y="964.4" width="14.7" height="24" fill="#f6b94f"/>
<rect x="710" y="964.4" width="14.7" height="24" fill="#2ecba6"/>
<rect x="779" y="964.4" width="14.7" height="24" fill="#88ad4c"/>
<rect x="806.7" y="964.4" width="14.7" height="24" fill="#8b0000"/>
<rect x="821" y="964.4" width="14.7" height="24" fill="#8e4f86"/>
<rect x="903.3" y="964.4" width="14.7" height="24" fill="#00ff7f"/>
<rect x="959" y="964.4" width="14.7" height="24" fill="#000080"/>
<rect x="1014" y="964.4" width="14.7" height="24" fill="#2ecba6"/>
<rect x="1124.3" y="964.4" width="14.7" height="24" fill="#a9a9a9"/>
<rect x="1290.7" y="964.4" width="14.7" height="24" fill="#2ecba6"/>
<rect x="1304.3" y="964.4" width="14.7" height="24" fill="#f6b94f"/>
<rect x="1373.3" y="964.4" width="14.7" height="24" fill="#8b0000"/>
<rect x="1428.3" y="964.4" width="14.7" height="24" fill="#d4db3a"/>
<rect x="1470" y="964.4" width="14.7" height="24" fill="#48aacd"/>
<rect x="1608.3" y="964.4" width="14.7" height="24" fill="#f6b94f"/>
<rect x="1719" y="964.4" width="14.7" height="24" fill="#88ad4c"/>
<rect x="1746" y="964.4" width="14.7" height="24" fill="#8e4f86"/>
<rect x="1815" y="964.4" width="14.7" height="24" fill="#00ff7f"/>
<rect x="1884.3" y="964.4" width="14.7" height="24" fill="#000080"/>
<text x="98" y="981.3" font-family="Liberation Sans" font-size="13" fill="#333">A</text>
<text x="141" y="981.3" font-family="Liberation Sans" font-size="13" fill="#333">B</text>
<text x="196" y="981.3" font-family="Liberation Sans" font-size="13" fill="#333">C</text>
<text x="251.5" y="981.3" font-family="Liberation Sans" font-size="13" fill="#333">D</text>
<text x="541.7" y="981.3" font-family="Liberation Sans" font-size="13" fill="#333">E</text>
<text x="541.7" y="1011.3" font-family="Liberation Sans" font-size="13" fill="#333">F</text>
<text x="651.5" y="981.3" font-family="Liberation Sans" font-size="13" fill="#333">G</text>
<text x="693.3" y="981.3" font-family="Liberation Sans" font-size="13" fill="#333">H</text>
<text x="767.5" y="981.3" font-family="Liberation Sans" font-size="13" fill="#333">I</text>
<text x="844.3" y="981.3" font-family="Liberation Sans" font-size="13" fill="#333">K</text>
<text x="889.3" y="981.3" font-family="Liberation Sans" font-size="13" fill="#333">L</text>
<text x="940.7" y="981.3" font-family="Liberation Sans" font-size="13" fill="#333">M</text>
<text x="997.3" y="981.3" font-family="Liberation Sans" font-size="13" fill="#333">N</text>
<text x="1107.7" y="981.3" font-family="Liberation Sans" font-size="13" fill="#333">O</text>
<text x="1274" y="981.3" font-family="Liberation Sans" font-size="13" fill="#333">P</text>
<text x="1328.3" y="981.3" font-family="Liberation Sans" font-size="13" fill="#333">Q</text>
<text x="1356.7" y="981.3" font-family="Liberation Sans" font-size="13" fill="#333">R</text>
<text x="1412.7" y="981.3" font-family="Liberation Sans" font-size="13" fill="#333">S</text>
<text x="1455" y="981.3" font-family="Liberation Sans" font-size="13" fill="#333">T</text>
<text x="1591.7" y="981.3" font-family="Liberation Sans" font-size="13" fill="#333">U</text>
<text x="1702.7" y="981.3" font-family="Liberation Sans" font-size="13" fill="#333">V</text>
<text x="1768.3" y="981.3" font-family="Liberation Sans" font-size="13" fill="#333">W</text>
<text x="1799.3" y="981.3" font-family="Liberation Sans" font-size="13" fill="#333">X</text>
<text x="1868.3" y="981.3" font-family="Liberation Sans" font-size="13" fill="#333">Y</text>
<text x="14" y="996" font-family="Liberation Sans" font-size="13" fill="#333">Timeline</text>
<rect x="0" y="1018" width="1901" height="17" fill="#f1f1f1"/>
<rect x="17" y="1020" width="1854" height="12.5" fill="#c1c1c1"/>
<path d="M10.5 1022 L6 1026.3 L10.5 1030.5 Z" fill="#a3a3a3"/>
<path d="M1890.5 1022 L1895 1026.3 L1890.5 1030.5 Z" fill="#505050"/>
<rect x="1901" y="1018" width="17" height="17" fill="#dcdcdc"/>
<rect x="0" y="1035" width="1920" height="5" fill="#eef0f2"/>
</svg>
</body></html>
